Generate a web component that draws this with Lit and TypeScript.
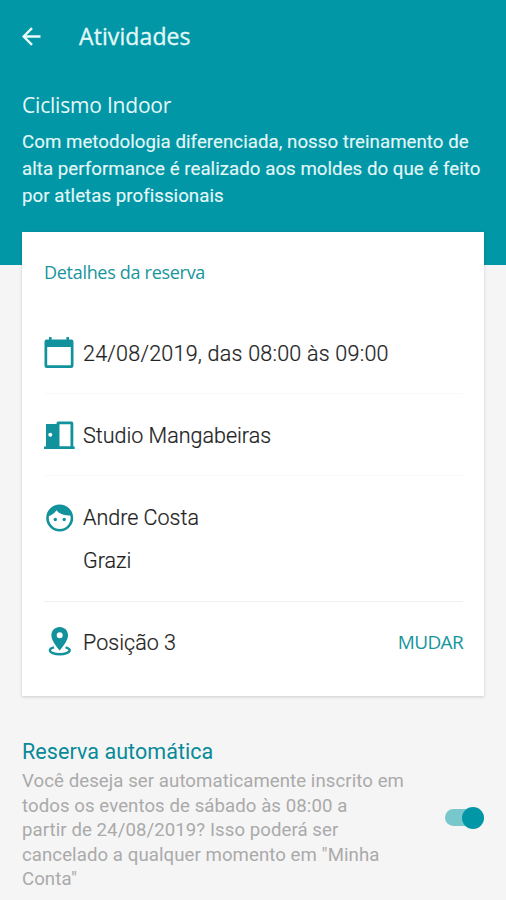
import { LitElement, html, css } from "lit";
import { customElement, property, state } from "lit/decorators.js";

@customElement("app-toggle")
class AppToggle extends LitElement {
  @property({ type: Boolean, reflect: true }) on = false;

  static styles = css`
    :host { display: block; }
    .track {
      display: flex;
      align-items: center;
      justify-content: flex-start;
      width: 39px;
      height: 17px;
      border-radius: 9px;
      background: #c4c4c4;
    }
    .knob {
      flex: none;
      width: 22px;
      height: 22px;
      border-radius: 50%;
      background: #fafafa;
    }
    :host([on]) .track { justify-content: flex-end; background: #78c7cd; }
    :host([on]) .knob { background: #0297a7; }
  `;

  render() {
    return html`<div class="track" role="switch" aria-checked=${this.on}><div class="knob"></div></div>`;
  }
}

@customElement("app-root")
class AppRoot extends LitElement {
  @state() private repeat = true;

  static styles = css`
    :host {
      display: block;
      height: 900px;
      overflow: hidden;
      background: #f5f5f5;
      font-family: Roboto, "Liberation Sans", sans-serif;
    }
    * { box-sizing: border-box; }
    svg { display: block; }
    .segoe { font-family: "Open Sans", "Noto Sans", sans-serif; }
    .hero { height: 265px; padding: 0 22px; background: #0297a7; color: #e4f8f8; }
    .bar { display: flex; align-items: center; height: 73px; }
    .bar svg { margin-right: 38px; }
    .title { margin-top: -2px; font-size: 23px; line-height: 30px; letter-spacing: 0.1px; -webkit-text-stroke: 0.3px #e4f8f8; }
    .name { margin-top: 18px; font-size: 21px; line-height: 28px; letter-spacing: -0.2px; }
    .about { margin-top: 10px; font-size: 18.7px; line-height: 26.8px; letter-spacing: 0.03px; -webkit-text-stroke: 0.12px #e4f8f8; }
    .line { display: block; white-space: nowrap; }
    .card {
      width: 462px;
      height: 464px;
      margin: -33px 0 0 22px;
      padding: 27px 21px 0 22px;
      background: #fff;
      box-shadow: 0 1px 3px rgba(0, 0, 0, 0.17);
    }
    .heading { height: 26px; font-size: 18px; line-height: 26px; letter-spacing: -0.3px; color: #17959c; }
    .row { display: flex; align-items: center; height: 82px; border-bottom: 1px solid #f9f9f9; font-size: 21.5px; font-weight: 300; color: #222; -webkit-text-stroke: 0.2px #222; }
    .row.first { margin-top: 27px; }
    .row.tall { height: 126px; align-items: flex-start; border-color: #f1f1f1; }
    .row.last { height: 79px; border: 0; }
    .date { padding-top: 2px; letter-spacing: 0.23px; }
    .studio { padding-top: 2px; }
    .place { padding-top: 1px; letter-spacing: 0.04px; }
    .icon { flex: none; width: 39px; }
    .tall .icon { padding-top: 28px; }
    .people { padding-top: 20px; line-height: 43px; }
    .change { margin-left: auto; font-size: 19px; font-weight: 400; letter-spacing: -0.65px; color: #17959c; -webkit-text-stroke: 0; }
    .auto { display: flex; align-items: center; justify-content: space-between; margin: 41px 22px 0; }
    .auto-title { font-size: 21.5px; line-height: 30px; letter-spacing: 0.06px; color: #078a98; }
    .auto-text { margin-top: 2px; font-size: 18.6px; line-height: 24.5px; letter-spacing: 0.08px; color: #aaa; }
    .auto app-toggle { margin-top: 7px; }
  `;

  render() {
    return html`
      <header class="hero">
        <div class="bar">
          <svg width="19" height="19" viewBox="0 0 19 19" fill="none" stroke="#e8fbfb" stroke-width="2.4">
            <path d="M18.500 9.500H2M10 1.200L1.700 9.500L10 17.800" />
          </svg>
          <span class="title segoe">Atividades</span>
        </div>
        <div class="name segoe">Ciclismo Indoor</div>
        <div class="about">
          <span class="line">Com metodologia diferenciada, nosso treinamento de</span>
          <span class="line">alta performance é realizado aos moldes do que é feito</span>
          <span class="line">por atletas profissionais</span>
        </div>
      </header>
      <main>
        <section class="card">
          <div class="heading segoe">Detalhes da reserva</div>
          <div class="row first">
            <div class="icon">
              <svg width="30" height="32" viewBox="0 0 30 32">
                <path fill="#11929c" fill-rule="evenodd" d="M5 0h2.600v2.500h14.800V0H25v2.500h2.200A2.300 2.300 0 0 1 29.500 4.800V28.700a2.300 2.300 0 0 1-2.300 2.300H2.800A2.300 2.300 0 0 1 .5 28.700V4.800A2.300 2.300 0 0 1 2.800 2.500H5ZM3.200 10V28.300H26.800V10Z" />
              </svg>
            </div>
            <span class="date">24/08/2019, das 08:00 às 09:00</span>
          </div>
          <div class="row">
            <div class="icon">
              <svg width="31" height="28" viewBox="0 0 31 28">
                <path fill="#11929c" fill-rule="evenodd" d="M2 3H12.500V2.200Q12.500.5 14.200.5H27.500Q29.300.5 29.300 2.300V25.500H30.700V28H0V25.500H2ZM15.500 3.200V25.300H26.500V3.200ZM6.300 11.700a2 2 0 1 0 0 4a2 2 0 1 0 0-4Z" />
              </svg>
            </div>
            <span class="studio">Studio Mangabeiras</span>
          </div>
          <div class="row tall">
            <div class="icon">
              <svg width="31" height="28" viewBox="0 0 31 28">
                <circle cx="15.700" cy="14" r="12.200" fill="#fff" stroke="#11929c" stroke-width="2.600" />
                <path fill="#11929c" d="M3 12.500C7 11.800 10.500 9.500 12.500 6.200C15.500 10 20.500 12.200 28 11.200C26.500 4.500 21.500 1.200 15.700 1.200C9 1.200 3.800 6 3 12.500Z" />
                <circle cx="11.300" cy="15.500" r="1.700" fill="#11929c" />
                <circle cx="20.200" cy="15.500" r="1.700" fill="#11929c" />
              </svg>
            </div>
            <div class="people">
              <span class="line">Andre Costa</span>
              <span class="line">Grazi</span>
            </div>
          </div>
          <div class="row last">
            <div class="icon">
              <svg width="31" height="29" viewBox="0 0 31 29">
                <path fill="#11929c" fill-rule="evenodd" d="M15.700 0C20.500 0 24 3.600 24 8.200C24 12.500 21 17 15.700 23.500C10.400 17 7.400 12.500 7.400 8.200C7.400 3.600 10.900 0 15.700 0ZM15.700 5.200a3 3 0 1 0 0 6a3 3 0 1 0 0-6Z" />
                <path fill="none" stroke="#11929c" stroke-width="2.400" d="M10 20.300C7.500 20.900 5.900 21.900 5.900 23.200C5.900 25.500 10.500 27.200 15.700 27.200S25.700 25.500 25.700 23.200C25.700 21.900 24 20.900 21.500 20.300" />
              </svg>
            </div>
            <span class="place">Posição 3</span>
            <span class="change segoe">MUDAR</span>
          </div>
        </section>
        <section class="auto">
          <div>
            <div class="auto-title">Reserva automática</div>
            <div class="auto-text">
              <span class="line">Você deseja ser automaticamente inscrito em</span>
              <span class="line">todos os eventos de sábado às 08:00 a</span>
              <span class="line">partir de 24/08/2019? Isso poderá ser</span>
              <span class="line">cancelado a qualquer momento em "Minha</span>
              <span class="line">Conta"</span>
            </div>
          </div>
          <app-toggle ?on=${this.repeat} @click=${() => (this.repeat = !this.repeat)}></app-toggle>
        </section>
      </main>
    `;
  }
}
